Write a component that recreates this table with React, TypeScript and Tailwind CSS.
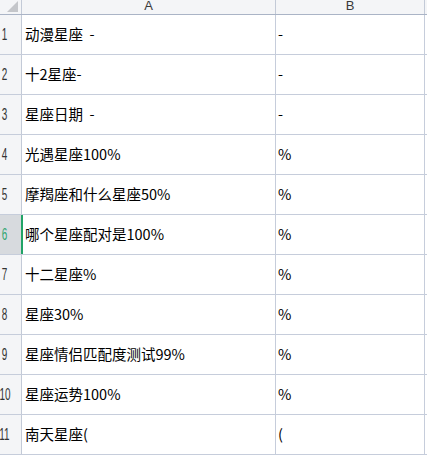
const rows = [
  { a: "动漫星座  -", b: "-" },
  { a: "十2星座-", b: "-" },
  { a: "星座日期  -", b: "-" },
  { a: "光遇星座100%", b: "%" },
  { a: "摩羯座和什么星座50%", b: "%" },
  { a: "哪个星座配对是100%", b: "%" },
  { a: "十二星座%", b: "%" },
  { a: "星座30%", b: "%" },
  { a: "星座情侣匹配度测试99%", b: "%" },
  { a: "星座运势100%", b: "%" },
  { a: "南天星座(", b: "(" },
];

const cellFont = {
  fontFamily: '"Noto Sans CJK SC", "Liberation Sans", sans-serif',
};

export default function App() {
  return (
    <div className="w-[427px] h-[460px] overflow-hidden bg-white">
      {/* column headers */}
      <div className="flex h-[15px] border-b border-[#aab4c6] bg-[#f4f5f7]">
        <div className="relative w-[22px] border-r border-[#c3cad7]">
          <div className="absolute right-[3px] bottom-[2px] w-0 h-0 border-l-[11px] border-l-transparent border-b-[11px] border-b-[#c4c6ca]" />
        </div>
        <div className="w-[254px] border-r border-[#c3cad7] flex justify-center">
          <span className="-mt-[1px] text-[13px] leading-none text-[#3a3a3a] font-['Liberation_Sans']">
            A
          </span>
        </div>
        <div className="w-[149px] border-r border-[#c3cad7] flex justify-center">
          <span className="-mt-[1px] text-[13px] leading-none text-[#3a3a3a] font-['Liberation_Sans']">
            B
          </span>
        </div>
      </div>

      {rows.map((row, idx) => {
        const active = idx === 5;
        return (
          <div key={idx} className="flex h-[40px] border-b border-[#c6cddb]">
            <div
              className={`w-[22px] border-r border-[#c3cad7] flex items-center ${
                active ? "bg-[#d7dade]" : "bg-[#f4f5f7]"
              }`}
            >
              <div className="w-[9px] flex justify-center">
                <span
                  className={`scale-x-[0.62] text-[16px] leading-none font-['Liberation_Sans'] ${
                    active ? "text-[#2fa572]" : "text-[#333]"
                  }`}
                >
                  {idx + 1}
                </span>
              </div>
            </div>
            <div className="relative w-[254px] border-r border-[#c6cddb] flex items-center pl-[3px]">
              {active && (
                <div className="absolute -left-[1px] top-0 bottom-0 w-[2px] bg-[#21a366]" />
              )}
              <span
                className="text-[14.5px] leading-none text-black whitespace-pre"
                style={cellFont}
              >
                {row.a}
              </span>
            </div>
            <div className="w-[149px] border-r border-[#c6cddb] flex items-center pl-[2px]">
              <span
                className="text-[14.5px] leading-none text-black"
                style={cellFont}
              >
                {row.b}
              </span>
            </div>
          </div>
        );
      })}
    </div>
  );
}
